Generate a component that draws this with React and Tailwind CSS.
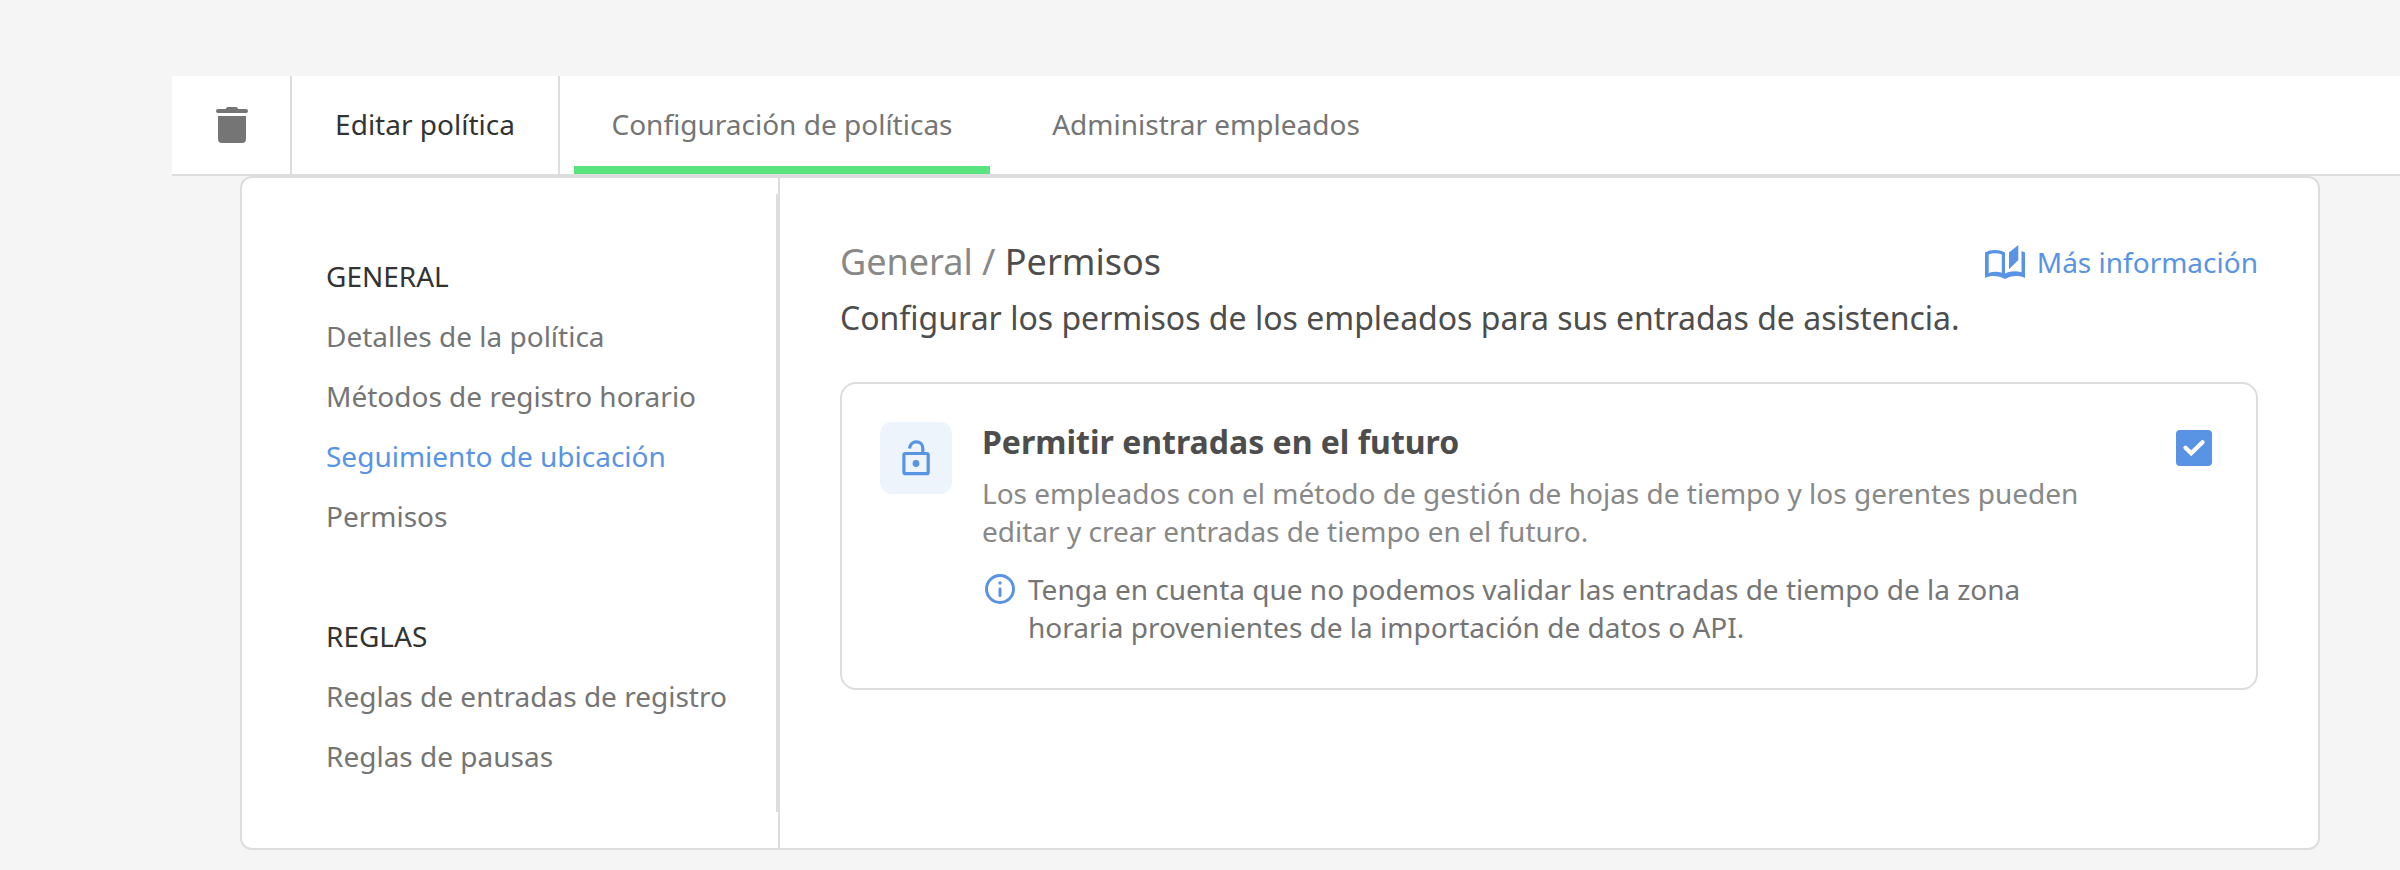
import { useState } from 'react';

const TABS = [
  { id: 'config', label: 'Configuración de políticas', width: 'w-[416px]' },
  { id: 'employees', label: 'Administrar empleados', width: 'w-[376px]' },
];

const SECTIONS = [
  {
    title: 'GENERAL',
    items: ['Detalles de la política', 'Métodos de registro horario', 'Seguimiento de ubicación', 'Permisos'],
  },
  {
    title: 'REGLAS',
    items: ['Reglas de entradas de registro', 'Reglas de pausas'],
  },
];

function TrashIcon() {
  return (
    <svg width="32" height="36" viewBox="0 0 32 36" fill="#757575" aria-hidden="true">
      <path d="M10 2c0-1.100.9-2 2-2h8c1.100 0 2 .9 2 2h8a2 2 0 0 1 0 4H2a2 2 0 0 1 0-4z" />
      <path d="M2 9h28v23a4 4 0 0 1-4 4H6a4 4 0 0 1-4-4z" />
    </svg>
  );
}

function BookIcon() {
  return (
    <svg width="40" height="34" viewBox="0 0 40 34" fill="currentColor" aria-hidden="true">
      <path
        fillRule="evenodd"
        d="M0 7.500C5.500 4.200 14.500 4.200 20 7.500V28.500C25 26 31 25.500 36.500 27.300V6L40 7.500V33C34 30 26 30.500 20 34C14 30.500 6 30 0 33ZM3.700 9.500V28C8 26.200 12.500 26.300 16.800 27.700V9.500C12.500 7.700 8 7.700 3.700 9.500Z"
      />
      <path d="M33.300 0V15L24 24.300V7.500Z" />
    </svg>
  );
}

function UnlockIcon() {
  return (
    <svg width="28" height="36" viewBox="0 0 28 36" fill="none" stroke="#5893e4" strokeWidth="3.200" aria-hidden="true">
      <rect x="1.900" y="13.500" width="24.300" height="20.200" rx="1.500" />
      <path d="M7.500 8.500c.5-3.900 3.300-6.700 6.800-6.700 3.700 0 6.500 2.800 6.500 6.600V13" />
      <circle cx="14" cy="23.500" r="3.400" fill="#5893e4" stroke="none" />
    </svg>
  );
}

function InfoIcon() {
  return (
    <svg width="32" height="32" viewBox="0 0 32 32" fill="none" stroke="#5893e4" strokeWidth="3" aria-hidden="true">
      <circle cx="16" cy="16" r="13.500" />
      <path d="M16 16v6.500" strokeLinecap="round" />
      <circle cx="16" cy="10" r="1.700" fill="#5893e4" stroke="none" />
    </svg>
  );
}

function Header({ tab, onTab }) {
  return (
    <header className="flex h-[100px] border-b-2 border-[#dddddd] bg-white whitespace-nowrap">
      <button aria-label="Eliminar" className="flex w-[120px] items-center justify-center border-r-2 border-[#dddddd] pl-0.5">
        <TrashIcon />
      </button>
      <h1 className="flex w-[268px] items-center justify-center border-r-2 border-[#dddddd] pb-0.5 text-[#333333]">
        Editar política
      </h1>
      <nav className="ml-3.5 flex gap-7">
        {TABS.map(({ id, label, width }) => (
          <button
            key={id}
            onClick={() => onTab(id)}
            className={`relative flex items-center justify-center pb-0.5 text-[#757575] ${width}`}
          >
            {label}
            {tab === id && <span className="absolute inset-x-0 bottom-0 h-2 bg-[#5ae47d]" />}
          </button>
        ))}
      </nav>
    </header>
  );
}

function Sidebar({ active, onSelect }) {
  return (
    <aside className="w-[538px] shrink-0 border-r-2 border-[#dddddd] pt-4 pb-9">
      <nav className="flex flex-col gap-[60px] border-r-2 border-[#dddddd] pt-[52px] pb-[26px] pl-[84px]">
        {SECTIONS.map(({ title, items }) => (
          <div key={title}>
            <h2 className="leading-[60px] text-[#333333]">{title}</h2>
            <ul>
              {items.map((item) => (
                <li key={item}>
                  <a
                    href="#"
                    onClick={() => onSelect(item)}
                    className={`block leading-[60px] whitespace-nowrap ${active === item ? 'text-[#5893e4]' : 'text-[#757575]'}`}
                  >
                    {item}
                  </a>
                </li>
              ))}
            </ul>
          </div>
        ))}
      </nav>
    </aside>
  );
}

function PermissionCard() {
  const [allowed, setAllowed] = useState(true);

  return (
    <section className="mt-10 flex items-start rounded-2xl border-2 border-[#dddddd] pt-[38px] pr-11 pb-[42px] pl-[38px]">
      <div className="flex size-[72px] shrink-0 items-center justify-center rounded-xl bg-[#edf4fc]">
        <UnlockIcon />
      </div>
      <div className="mr-[72px] ml-[30px] flex-1 leading-[38px]">
        <label htmlFor="future-entries" className="block text-[32px] leading-10 font-bold text-[#4d4d4d]">
          Permitir entradas en el futuro
        </label>
        <p className="mt-3 text-[#888888]">
          Los empleados con el método de gestión de hojas de tiempo y los gerentes pueden editar y crear entradas de
          tiempo en el futuro.
        </p>
        <div className="mt-5 ml-0.5 flex gap-3">
          <span className="flex h-[38px] shrink-0 items-center">
            <InfoIcon />
          </span>
          <p className="text-[#757575]">
            Tenga en cuenta que no podemos validar las entradas de tiempo de la zona horaria provenientes de la
            importación de datos o API.
          </p>
        </div>
      </div>
      <div className="mt-2 grid shrink-0">
        <input
          id="future-entries"
          type="checkbox"
          checked={allowed}
          onChange={(e) => setAllowed(e.target.checked)}
          className="col-start-1 row-start-1 size-9 appearance-none rounded border-2 border-[#5893e4] bg-white checked:bg-[#5893e4]"
        />
        <svg
          className="pointer-events-none col-start-1 row-start-1 size-9"
          viewBox="0 0 36 36"
          fill="none"
          stroke="white"
          strokeWidth="4.300"
          strokeLinecap="round"
          aria-hidden="true"
        >
          <path d="M9.500 17.800l5.700 5.500L26.500 12.200" />
        </svg>
      </div>
    </section>
  );
}

export default function App() {
  const [tab, setTab] = useState('config');
  const [active, setActive] = useState('Seguimiento de ubicación');

  return (
    <div className='min-h-screen bg-[#f5f5f5] pt-[76px] pl-[172px] font-["Noto_Sans",sans-serif] text-[28px]'>
      <Header tab={tab} onTab={setTab} />

      <div className="mr-20 ml-[68px] flex rounded-xl border-2 border-[#dddddd] bg-white">
        <Sidebar active={active} onSelect={setActive} />

        <main className="flex-1 px-[60px] pt-[60px]">
          <div className="flex items-center justify-between">
            <h2 className="text-4xl leading-[48px] text-[#4d4d4d]">
              <span className="text-[#888888]">General /</span> Permisos
            </h2>
            <a href="#" className="flex items-center gap-3 leading-[48px] text-[#5893e4]">
              <BookIcon />
              Más información
            </a>
          </div>
          <p className="mt-2 text-[32px] leading-[48px] text-[#4d4d4d]">
            Configurar los permisos de los empleados para sus entradas de asistencia.
          </p>
          <PermissionCard />
        </main>
      </div>
    </div>
  );
}
